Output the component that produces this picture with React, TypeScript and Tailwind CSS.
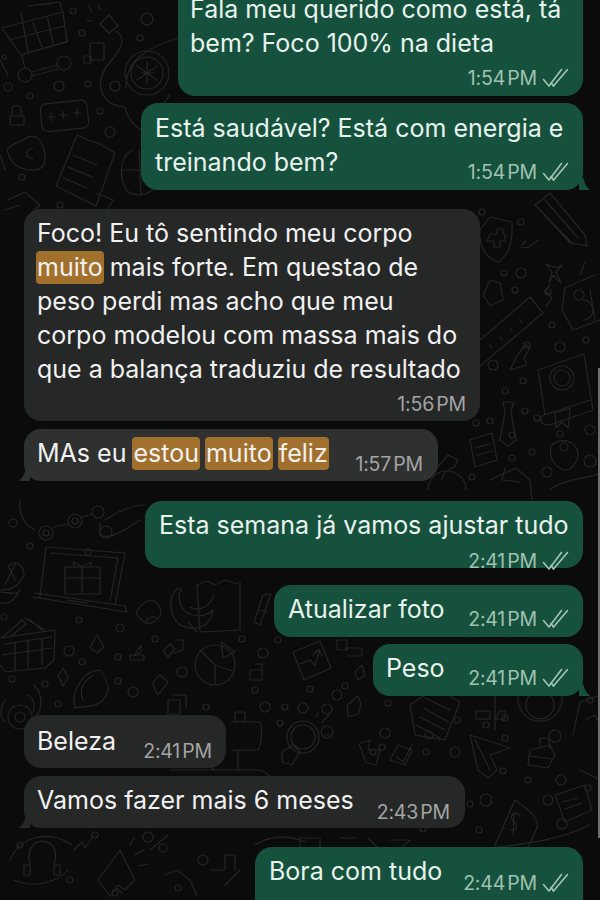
const dots: [number, number, number][] = [
  [73, 11, 3], [147, 19, 6], [82, 33, 3], [140, 38, 3], [8, 87, 4], [59, 86, 5], [88, 84, 3], [115, 86, 5], [30, 96, 3], [100, 111, 3],
  [110, 132, 5], [22, 177, 3], [60, 205, 3], [4, 57, 2],
  [482, 212, 3], [521, 222, 3], [504, 273, 3], [521, 273, 5], [515, 290, 3], [548, 292, 3], [552, 325, 3], [527, 345, 3], [560, 347, 5], [586, 340, 3],
  [493, 365, 5], [523, 381, 3], [505, 391, 3], [525, 411, 3], [490, 421, 3], [476, 423, 3], [537, 418, 3], [512, 435, 3], [560, 434, 3], [590, 430, 5], [590, 461, 6],
  [547, 472, 5], [472, 477, 3], [532, 452, 3], [512, 458, 3],
  [4, 617, 3], [13, 523, 4], [30, 546, 3], [88, 552, 3], [79, 620, 3], [120, 628, 4], [69, 651, 5], [82, 662, 3], [118, 657, 3], [12, 679, 3], [45, 684, 3], [58, 704, 3], [118, 681, 3], [133, 692, 5], [155, 639, 3], [182, 672, 5],
  [242, 639, 3], [278, 640, 3], [263, 653, 5], [255, 690, 3], [303, 708, 5], [285, 707, 3], [206, 707, 3], [345, 686, 3], [337, 695, 5], [327, 709, 5], [310, 689, 3],
  [265, 707, 5], [280, 723, 3], [327, 732, 6], [385, 733, 5], [388, 703, 3], [373, 752, 3], [457, 720, 3], [486, 725, 3], [505, 738, 3], [503, 771, 3],
  [426, 752, 3], [382, 747, 3], [429, 735, 4], [455, 752, 5], [505, 718, 3], [555, 736, 6], [528, 780, 3], [561, 780, 5], [590, 700, 3], [562, 824, 5], [588, 788, 3], [548, 800, 5],
  [486, 800, 6], [470, 804, 3], [423, 829, 3], [479, 830, 3], [20, 845, 3], [95, 835, 3], [148, 837, 5], [163, 848, 4], [178, 888, 3], [203, 860, 5], [70, 880, 3], [115, 893, 3],
];

function Doodles() {
  return (
    <svg
      className="absolute inset-0 h-[900px] w-[600px] blur-[0.4px]"
      viewBox="0 0 600 900"
      fill="none"
      stroke="#252525"
      strokeWidth="1.2"
      strokeLinejoin="round"
      strokeLinecap="round"
    >
      {dots.map(([x, y, r], i) => (
        <circle key={i} cx={x} cy={y} r={r} />
      ))}
      {/* cart */}
      <path d="M2 28L63 12L67 42L21 55ZM21 12L28 52M33 23L42 47M47 16L53 43M9 40L64 26M21 55L68 41M22 56L25 68" />
      <circle cx="25" cy="75" r="7" />
      <circle cx="64" cy="63" r="7" />
      <path d="M32 72L57 65M32 76L58 69" />
      <path d="M28 6L60 2L62 12M35 5L50 4" />
      {/* plug and cable */}
      <path d="M100 24L109 15L118 26L109 33ZM88 5L92 12M98 4L100 10M86 20L92 21M116 31C128 40 120 50 110 62C93 82 100 105 125 107C128 120 135 128 150 135" />
      <path d="M90 43H104V60H90ZM84 56H91V63H84Z" />
      {/* flower wheel */}
      <circle cx="147" cy="73" r="16" />
      <circle cx="147" cy="73" r="22" />
      <path d="M147 62L147 84M137 66L157 80M157 66L137 80M141 73H153" />
      <path d="M178 38C145 48 125 62 126 88M169 95C165 105 158 108 150 108" />
      {/* ticket */}
      <rect x="41" y="102" width="47" height="28" rx="6" transform="rotate(-6 64 116)" />
      <path d="M47 117L55 117M51 113L51 121M59 115L67 115M63 111L63 119M73 113L81 113M77 109L77 117" />
      {/* lock and egg */}
      <path d="M10 116H24V125H10ZM12 116V110C12 104 21 104 21 110V116" />
      <path d="M7 150C12 142 22 142 28 137C36 134 42 140 44 150C46 158 46 168 36 170C26 170 12 170 7 150Z" />
      <path d="M33 148C26 148 24 158 33 159" />
      {/* receipt */}
      <path d="M77 135L88 140L100 144L115 153L96 206L56 186ZM73 155L97 165M68 167L92 177M63 178L87 188M96 193L113 200L107 210" />
      <path d="M133 150C118 155 118 185 130 193C142 198 155 192 160 180M122 170H160M139 150L141 195" />
      <path d="M8 200L25 192L40 205L30 215M5 210L20 205" />
      {/* shield and pencil */}
      <path d="M490 217L512 222C513 240 510 255 498 262C488 258 478 250 480 230ZM490 234H497V229H503V234H505V241H500V247H494V241H487Z" />
      <path d="M535 205L550 193L585 235L587 246L572 243ZM545 200L578 238M540 210L570 243" />
      <path d="M522 245L526 241M530 246L538 240M520 248L530 247" />
      <path d="M562 265L556 272L561 283L553 275L549 283L552 272L546 264L556 268Z" />
      <path d="M490 280L500 283L502 293L503 300L490 306L483 295Z" />
      <path d="M550 285L545 291L552 298L546 306" />
      {/* robot */}
      <path d="M565 288L595 275M565 288L562 310L573 330L600 320M590 290L595 320M580 275L585 262M583 300A10 10 0 1 1 583 320" />
      <circle cx="579" cy="295" r="5" />
      {/* ruler */}
      <path d="M480 340L530 297L543 313L480 366M490 345L492 348M500 337L502 340M510 328L512 331M520 320L522 323" />
      {/* chess and book */}
      <path d="M521 350L526 345L530 348L524 358L527 365L510 370L516 358Z" />
      <path d="M538 370L584 354L593 410L550 425C540 425 538 418 544 415L590 400M538 370L545 415M555 413L570 408L568 428L562 422L556 428Z" />
      <circle cx="562" cy="378" r="12" />
      <circle cx="562" cy="378" r="8" />
      {/* tie, note, pin */}
      <path d="M503 402H514L511 412L516 440L508 446L500 440L505 412Z" />
      <path d="M470 440L492 433L497 460L475 467ZM475 448L490 444M477 455L492 451" />
      <path d="M551 446C560 437 575 440 578 452C578 465 570 470 564 470C557 468 548 460 551 446Z" />
      <circle cx="564" cy="447" r="4" />
      {/* scooter / clipboard */}
      <path d="M435 470L448 455L458 460L455 466C452 470 444 468 442 480M428 490A18 18 0 0 1 466 490" />
      <path d="M490 480L516 468L530 480L532 500M505 468L502 480L520 482" />
      <path d="M550 490C560 480 590 478 600 473" />
      {/* laptop */}
      <path d="M46 547L125 553L115 605M46 547L40 597M51 553L118 558L110 601M33 597L127 612L125 606L35 593M66 600L88 603" />
      <path d="M65 567H100V594H65ZM65 578H100M82 567V594M82 567C72 560 72 562 75 567M82 567C92 560 92 562 90 567" />
      <path d="M105 520C120 510 135 505 145 505M100 523L100 535C110 540 125 530 140 520" />
      <circle cx="106" cy="532" r="6" />
      <circle cx="46" cy="533" r="7" />
      <circle cx="46" cy="533" r="3" />
      <circle cx="75" cy="521" r="7" />
      <circle cx="75" cy="521" r="3" />
      <circle cx="98" cy="512" r="6" />
      <path d="M20 500C18 515 25 525 35 530M53 527L69 524M82 517L92 514" />
      {/* pineapple and basket */}
      <path d="M10 565C15 560 24 565 24 575C18 588 10 590 0 590M0 592C8 592 16 596 20 590C15 600 8 605 0 603M8 565L15 580M16 563L5 585" />
      <path d="M0 638L55 630L54 660L45 668L5 672L0 665M4 644L52 637M2 655L52 648M15 642L15 670M28 640L28 668M42 638L42 665M3 637L22 620L26 624L10 637M30 620L42 630M25 618L45 630" />
      <path d="M97 635L104 647L97 653L90 647Z" />
      <path d="M58 676L63 668L68 677L63 686Z" />
      {/* apple, banana and bag */}
      <path d="M142 605C150 596 160 602 161 612C160 620 148 628 142 620C135 615 135 610 142 605ZM146 622C148 616 154 616 156 618" />
      <path d="M178 588C168 595 168 615 180 625C195 632 210 628 213 610C205 618 190 618 182 608C178 600 178 593 182 590ZM190 607C198 612 208 608 214 596" />
      <path d="M197 585L200 632L240 630L240 582M197 585L207 581L215 585L225 580L238 584M197 632L188 622" />
      <path d="M263 595L271 594L260 625L254 622ZM258 610L268 612" />
      {/* pie chart */}
      <circle cx="215" cy="665" r="20" />
      <path d="M215 665L200 650M215 665L232 671M215 665L215 684M221 642L235 652L223 658Z" />
      <path d="M130 655H144V660H130ZM141 645V652L134 656ZM163 651L170 644L175 649L168 657ZM175 640H183V650L174 653" />
      <path d="M250 670H262V680H250ZM256 664H262V670" />
      {/* taco */}
      <path d="M75 708C70 690 85 670 100 670C108 680 112 690 103 700C95 708 84 706 75 708ZM83 700C78 690 85 680 92 676" />
      <path d="M20 705A12 12 0 1 0 20.1 705M20 712A5 5 0 1 0 20.1 712M34 685C44 695 42 710 36 716M28 695C35 700 35 708 33 712M5 700C0 708 0 716 5 722" />
      <path d="M153 682L160 675L168 682L158 695L155 690Z" />
      <path d="M168 700H180V714H168ZM173 695H186V707" />
      {/* chart tile */}
      <path d="M293 652L320 641L331 668L304 680ZM300 664L310 660L315 665L320 650M313 655L318 650L322 655" />
      <path d="M337 640H347V650H337ZM345 648H362V656H347" />
      <path d="M355 672L362 665L365 675L358 680Z" />
      <path d="M353 700L358 696L361 704L358 714L348 717L347 706Z" />
      {/* lamp ring */}
      <circle cx="303" cy="737" r="16" />
      <circle cx="303" cy="737" r="12" />
      <path d="M322 722L329 715M325 735L330 734M316 717L318 713" />
      <path d="M235 712H245V722H235ZM232 722H260C262 725 262 745 258 750H232M238 750V770" />
      <path d="M282 752L293 745L300 752L292 765L282 762Z" />
      <path d="M359 744L370 740L368 750L380 750L376 765L366 762Z" />
      <path d="M398 745L412 750L405 765L390 760ZM397 757L403 762L412 745" />
      {/* document tile and cursor */}
      <path d="M410 705L435 688L460 702L445 740L415 735ZM424 708L448 722M420 717L445 730M416 725L440 738M425 698L450 710" />
      <path d="M470 735L510 748L490 755L497 770L488 778L478 770ZM475 740L490 770" />
      <path d="M476 711H490V719H476ZM500 711H505V719H495ZM495 692V730" />
      <path d="M530 750L550 745L555 755L548 768L528 765ZM540 745V738H548L550 748M530 756L552 759" />
      <path d="M585 720L595 715L600 725M573 735L580 702L600 695M580 770L600 780" />
      <path d="M520 690A22 22 0 1 0 560 690M530 695A14 14 0 1 0 550 695" />
      {/* dollar card */}
      <path d="M495 845L515 800C530 810 540 820 537 828L520 865C505 862 495 855 495 845Z" />
      <path d="M520 815C515 812 508 815 513 821C518 825 518 832 510 830M514 812L513 835" />
      <path d="M555 795L585 785L592 810L565 822ZM562 802L578 798M565 809L582 803" />
      <path d="M480 850C500 845 550 845 590 825" />
      {/* headset, megaphone */}
      <path d="M30 865C25 845 40 835 52 845C58 852 55 860 54 865M30 865H24V875H30ZM54 865H60V875H54ZM10 860C20 835 50 830 72 845M14 880C35 890 60 880 68 870" />
      <path d="M98 880L120 850L135 880L125 890L118 885L110 896ZM116 888L122 893M135 855L144 850M138 866L148 864M130 845L134 838" />
      <path d="M74 850L82 842L85 848L92 838" />
      <path d="M165 875L177 870L190 880L197 895M150 850L168 835" />
      <path d="M210 870L225 870L225 855L235 855L235 870M225 885L240 870" />
      <path d="M300 838H320V850H300ZM340 838H355M368 838L378 848M390 840L410 840L400 850" />
      <path d="M170 770H260C275 775 280 790 280 800M200 760L215 770" />
      <path d="M255 845C270 835 290 835 305 842" />
      <path d="M0 60L8 75M0 155L5 170" />
    </svg>
  );
}

function Ticks() {
  return (
    <svg className="ml-[5px] h-[20px] w-[27px] shrink-0" viewBox="0 0 27 20" fill="none" stroke="#a4c6b5" strokeWidth="1.6" strokeLinecap="round" strokeLinejoin="round">
      <path d="M1.5 11.5L7 18L19.5 1.5" />
      <path d="M11.5 18L25.5 1.5" />
      <path d="M9 14.5L11.5 18" />
    </svg>
  );
}

function Tail({ side, color }: { side: "left" | "right"; color: string }) {
  if (side === "right") {
    return (
      <svg className="absolute right-[-9px] bottom-0 h-[12px] w-[14px]" viewBox="0 0 14 14" fill={color}>
        <path d="M0 0H5C6 6 9 11 13 14H0Z" />
      </svg>
    );
  }
  return (
    <svg className="absolute left-[-7px] bottom-0 h-[12px] w-[14px]" viewBox="0 0 14 14" fill={color}>
      <path d="M14 0H9C8 6 5 11 1 14H14Z" />
    </svg>
  );
}

function Hl({ children }: { children: string }) {
  return <span className="-mx-[1px] inline-block h-[33px] rounded-[4px] bg-[#a2702d] px-[1px] leading-[33px]">{children}</span>;
}

function Time({ t, color }: { t: string; color: string }) {
  return <span className={`block text-[19.5px] leading-[20px] tracking-[-0.2px] whitespace-nowrap [word-spacing:-3px] ${color}`}>{t}</span>;
}

function OutTime({ t }: { t: string }) {
  return (
    <span className="flex items-center">
      <Time t={t} color="text-[#9fc2b1]" />
      <Ticks />
    </span>
  );
}

export default function App() {
  return (
    <div className="relative h-[900px] w-[600px] overflow-hidden bg-[#0b0b0b] font-['Inter','Liberation_Sans',sans-serif] text-[25px] leading-[34px]">
      <Doodles />
      <div className="absolute top-[368px] right-0 h-[470px] w-[2px] bg-[#6f6f6f]" />
      <div className="relative flex flex-col items-start pr-[17px] pl-[24px]">
        {/* sent */}
        <div className="-mt-[20px] flex h-[116px] w-[405px] flex-col self-end rounded-[17px] bg-[#16513d] pr-[14px] pl-[12px] pt-[12px] text-[#e8f3ee]">
          <p>Fala meu querido como está, tá</p>
          <p>bem? Foco 100% na dieta</p>
          <div className="mt-[8px] flex justify-end">
            <OutTime t="1:54 PM" />
          </div>
        </div>
        <div className="relative mt-[7px] flex h-[87px] w-[442px] flex-col self-end rounded-[17px] bg-[#16513d] pr-[14px] pl-[14px] pt-[8px] text-[#e8f3ee]">
          <p>Está saudável? Está com energia e</p>
          <p>treinando bem?</p>
          <div className="-mt-[17px] flex justify-end">
            <OutTime t="1:54 PM" />
          </div>
          <Tail side="right" color="#16513d" />
        </div>

        {/* received */}
        <div className="mt-[19px] flex h-[212px] w-[456px] flex-col rounded-[17px] bg-[#262727] pr-[14px] pl-[13px] pt-[7px] text-[#f1f1f1]">
          <p>Foco! Eu tô sentindo meu corpo</p>
          <p>
            <Hl>muito</Hl> mais forte. Em questao de
          </p>
          <p>peso perdi mas acho que meu</p>
          <p>corpo modelou com massa mais do</p>
          <p className="whitespace-nowrap">que a balança traduziu de resultado</p>
          <div className="mt-[8px] flex justify-end">
            <Time t="1:56 PM" color="text-[#a4a4a4]" />
          </div>
        </div>
        <div className="relative mt-[8px] flex h-[52px] w-[414px] justify-between rounded-[17px] bg-[#2f3030] pr-[15px] pl-[13px] pt-[7px] text-[#f1f1f1]">
          <p className="whitespace-nowrap">
            MAs eu <Hl>estou</Hl> <Hl>muito</Hl> <Hl>feliz</Hl>
          </p>
          <div className="pt-[18px]">
            <Time t="1:57 PM" color="text-[#a4a4a4]" />
          </div>
          <Tail side="left" color="#2f3030" />
        </div>

        {/* sent */}
        <div className="mt-[20px] flex h-[67px] w-[438px] flex-col self-end rounded-[17px] bg-[#16513d] pr-[14px] pl-[14px] pt-[7px] text-[#e8f3ee]">
          <p>Esta semana já vamos ajustar tudo</p>
          <div className="mt-[9px] flex justify-end">
            <OutTime t="2:41 PM" />
          </div>
        </div>
        <div className="mt-[17px] flex h-[52px] w-[309px] justify-between self-end rounded-[17px] bg-[#16513d] pr-[14px] pl-[14px] pt-[7px] text-[#e8f3ee]">
          <p>Atualizar foto</p>
          <div className="pt-[17px]">
            <OutTime t="2:41 PM" />
          </div>
        </div>
        <div className="relative mt-[7px] flex h-[52px] w-[210px] justify-between self-end rounded-[17px] bg-[#16513d] pr-[14px] pl-[13px] pt-[7px] text-[#e8f3ee]">
          <p>Peso</p>
          <div className="pt-[17px]">
            <OutTime t="2:41 PM" />
          </div>
          <Tail side="right" color="#16513d" />
        </div>

        {/* received */}
        <div className="mt-[19px] flex h-[53px] w-[202px] justify-between rounded-[17px] bg-[#262727] pr-[14px] pl-[13px] pt-[9px] text-[#f1f1f1]">
          <p>Beleza</p>
          <div className="pt-[17px]">
            <Time t="2:41 PM" color="text-[#a4a4a4]" />
          </div>
        </div>
        <div className="relative mt-[8px] flex h-[52px] w-[441px] justify-between rounded-[17px] bg-[#262727] pr-[15px] pl-[13px] pt-[7px] text-[#f1f1f1]">
          <p>Vamos fazer mais 6 meses</p>
          <div className="pt-[19px]">
            <Time t="2:43 PM" color="text-[#a4a4a4]" />
          </div>
          <Tail side="left" color="#262727" />
        </div>

        {/* sent */}
        <div className="mt-[19px] flex h-[70px] w-[328px] justify-between self-end rounded-[17px] bg-[#16513d] pr-[14px] pl-[14px] pt-[7px] text-[#e8f3ee]">
          <p>Bora com tudo</p>
          <div className="pt-[19px]">
            <OutTime t="2:44 PM" />
          </div>
        </div>
      </div>
    </div>
  );
}
